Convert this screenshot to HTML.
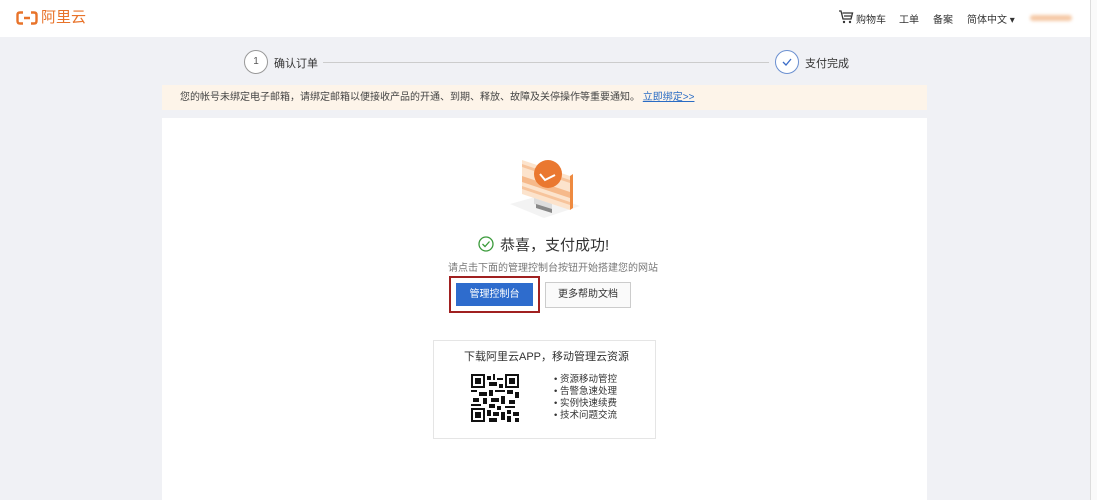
<!DOCTYPE html>
<html><head><meta charset="utf-8"><style>
*{margin:0;padding:0;box-sizing:border-box}
body{width:1097px;height:500px;overflow:hidden;background:#f0f1f5;font-family:"Liberation Sans","Noto Sans CJK SC",sans-serif;color:#333;position:relative}
.hdr{position:absolute;left:0;top:0;width:1090px;height:37px;background:#fff}
.scroll{position:absolute;left:1090px;top:0;width:7px;height:500px;background:#fafafa;border-left:1px solid #ddd}
.abs{position:absolute}
.logo{left:41px;top:9px;color:#e8732a;font-size:15px;letter-spacing:0px;line-height:18px}
.nav{top:12px;font-size:10px;color:#333}
.circ{width:24px;height:24px;border-radius:50%;border:1px solid #999;background:#fff;text-align:center;line-height:22px;font-size:10px;color:#555}
.notice{left:162px;top:85px;width:765px;height:25px;background:#fdf4e9;font-size:10px;color:#444;line-height:25px;padding-left:18px}
.notice a{color:#2a6cc4;text-decoration:underline}
.panel{left:162px;top:118px;width:765px;height:382px;background:#fff}
.btn1{left:449px;top:276px;width:91px;height:37px;border:2px solid #a02020}
.btn1 div{position:absolute;left:5px;top:5px;width:77px;height:23px;background:#2e6ccd;color:#fff;font-size:10px;text-align:center;line-height:23px}
.btn2{left:545px;top:282px;width:86px;height:26px;border:1px solid #ccc;background:#fafafa;font-size:10px;text-align:center;line-height:24px;color:#333}
.app{left:433px;top:340px;width:223px;height:99px;border:1px solid #e5e5e5;background:#fff}
</style></head><body>
<div class="hdr"></div>
<div class="scroll"></div>
<svg class="abs" style="left:16px;top:11px" width="22" height="14" viewBox="0 0 22 14"><path d="M7 1.5H4Q1.5 1.5 1.5 4v6q0 2.5 2.5 2.5h3M15 1.5h3q2.5 0 2.5 2.5v6q0 2.5-2.5 2.5h-3M8 7h6" fill="none" stroke="#e8732a" stroke-width="2.4"/></svg>
<div class="abs logo">阿里云</div>
<svg class="abs" style="left:838px;top:10px" width="16" height="14" viewBox="0 0 16 14"><path d="M1 1h2l2 8h8l1.5-6H4.5M6 6h7" fill="none" stroke="#333" stroke-width="1.3"/><circle cx="6" cy="12" r="1.2" fill="#333"/><circle cx="12" cy="12" r="1.2" fill="#333"/></svg>
<div class="abs nav" style="left:856px;top:11px">购物车</div>
<div class="abs nav" style="left:899px;top:11px">工单</div>
<div class="abs nav" style="left:933px;top:11px">备案</div>
<div class="abs nav" style="left:967px;top:11px">简体中文 ▾</div>
<div class="abs" style="left:1030px;top:15px;width:42px;height:6px;background:#f5c9a6;border-radius:3px;filter:blur(1.5px)"></div>

<div class="abs circ" style="left:244px;top:50px">1</div>
<div class="abs" style="left:274px;top:55px;font-size:11px">确认订单</div>
<div class="abs" style="left:323px;top:62px;width:446px;height:1px;background:#ccc"></div>
<div class="abs circ" style="left:775px;top:50px;border-color:#6a8fd0"><svg width="12" height="12" viewBox="0 0 12 12" style="margin-top:5px"><path d="M2 6l3 3 5-6" fill="none" stroke="#3a6cc8" stroke-width="1.3"/></svg></div>
<div class="abs" style="left:805px;top:55px;font-size:11px">支付完成</div>

<div class="abs notice">您的帐号未绑定电子邮箱，请绑定邮箱以便接收产品的开通、到期、释放、故障及关停操作等重要通知。 <a>立即绑定&gt;&gt;</a></div>
<div class="abs panel"></div>

<svg class="abs" style="left:508px;top:152px" width="76" height="72" viewBox="0 0 76 72">
<polygon points="2,52 36,66 72,54 38,42" fill="#f3f3f3"/>
<polygon points="14,8 62,24 62,58 14,42" fill="#fce3cc"/>
<polygon points="14,12 62,28 62,31 14,15" fill="#f7c49c"/>
<polygon points="14,24 62,40 62,46 14,30" fill="#f6b98a"/>
<polygon points="14,34 62,50 62,53 14,37" fill="#f7c49c"/>
<polygon points="62,24 65,22 65,56 62,58" fill="#ee8a40"/>
<polygon points="26,46 44,52 44,58 26,52" fill="#ddd"/>
<polygon points="28,52 44,57 44,61 28,56" fill="#888"/>
<circle cx="40" cy="22" r="14" fill="#ea7830"/>
<path d="M32 22l5 6 10-5" fill="none" stroke="#fff" stroke-width="2"/>
</svg>

<svg class="abs" style="left:478px;top:236px" width="16" height="16" viewBox="0 0 16 16"><circle cx="8" cy="8" r="7" fill="none" stroke="#3a9a3a" stroke-width="1.3"/><path d="M4.5 8l2.5 2.5 4.5-5" fill="none" stroke="#3a9a3a" stroke-width="1.3"/></svg>
<div class="abs" style="left:500px;top:234px;font-size:15px;color:#333">恭喜，支付成功!</div>
<div class="abs" style="left:448px;top:259px;font-size:10px;color:#777">请点击下面的管理控制台按钮开始搭建您的网站</div>
<div class="abs btn1"><div>管理控制台</div></div>
<div class="abs btn2">更多帮助文档</div>

<div class="abs app"></div>
<div class="abs" style="left:464px;top:348px;font-size:11px;color:#333">下载阿里云APP，移动管理云资源</div>
<svg class="abs" style="left:471px;top:374px" width="48" height="48" viewBox="0 0 24 24">
<rect width="24" height="24" fill="#fff"/>
<g fill="#111">
<rect x="0" y="0" width="7" height="7"/><rect x="17" y="0" width="7" height="7"/><rect x="0" y="17" width="7" height="7"/>
</g>
<g fill="#fff"><rect x="1" y="1" width="5" height="5"/><rect x="18" y="1" width="5" height="5"/><rect x="1" y="18" width="5" height="5"/></g>
<g fill="#111"><rect x="2" y="2" width="3" height="3"/><rect x="19" y="2" width="3" height="3"/><rect x="2" y="19" width="3" height="3"/>
<rect x="8" y="1" width="2" height="2"/><rect x="11" y="0" width="1" height="3"/><rect x="13" y="2" width="3" height="1"/><rect x="9" y="4" width="4" height="2"/><rect x="14" y="5" width="2" height="2"/>
<rect x="0" y="8" width="3" height="1"/><rect x="4" y="9" width="4" height="2"/><rect x="9" y="8" width="2" height="3"/><rect x="12" y="8" width="5" height="1"/><rect x="18" y="8" width="3" height="2"/><rect x="22" y="9" width="2" height="3"/>
<rect x="1" y="12" width="3" height="2"/><rect x="6" y="12" width="2" height="3"/><rect x="10" y="12" width="4" height="2"/><rect x="15" y="11" width="2" height="4"/><rect x="19" y="13" width="3" height="2"/>
<rect x="0" y="15" width="5" height="1"/><rect x="9" y="15" width="3" height="2"/><rect x="13" y="16" width="2" height="2"/><rect x="17" y="16" width="5" height="1"/>
<rect x="8" y="18" width="2" height="3"/><rect x="11" y="19" width="3" height="2"/><rect x="15" y="19" width="2" height="4"/><rect x="18" y="18" width="2" height="2"/><rect x="21" y="19" width="3" height="2"/>
<rect x="9" y="22" width="4" height="2"/><rect x="18" y="21" width="2" height="3"/><rect x="22" y="22" width="2" height="2"/></g>
</svg>
<div class="abs" style="left:554px;top:374px;font-size:9.5px;line-height:12px;color:#333">• 资源移动管控<br>• 告警急速处理<br>• 实例快速续费<br>• 技术问题交流</div>
</body></html>
